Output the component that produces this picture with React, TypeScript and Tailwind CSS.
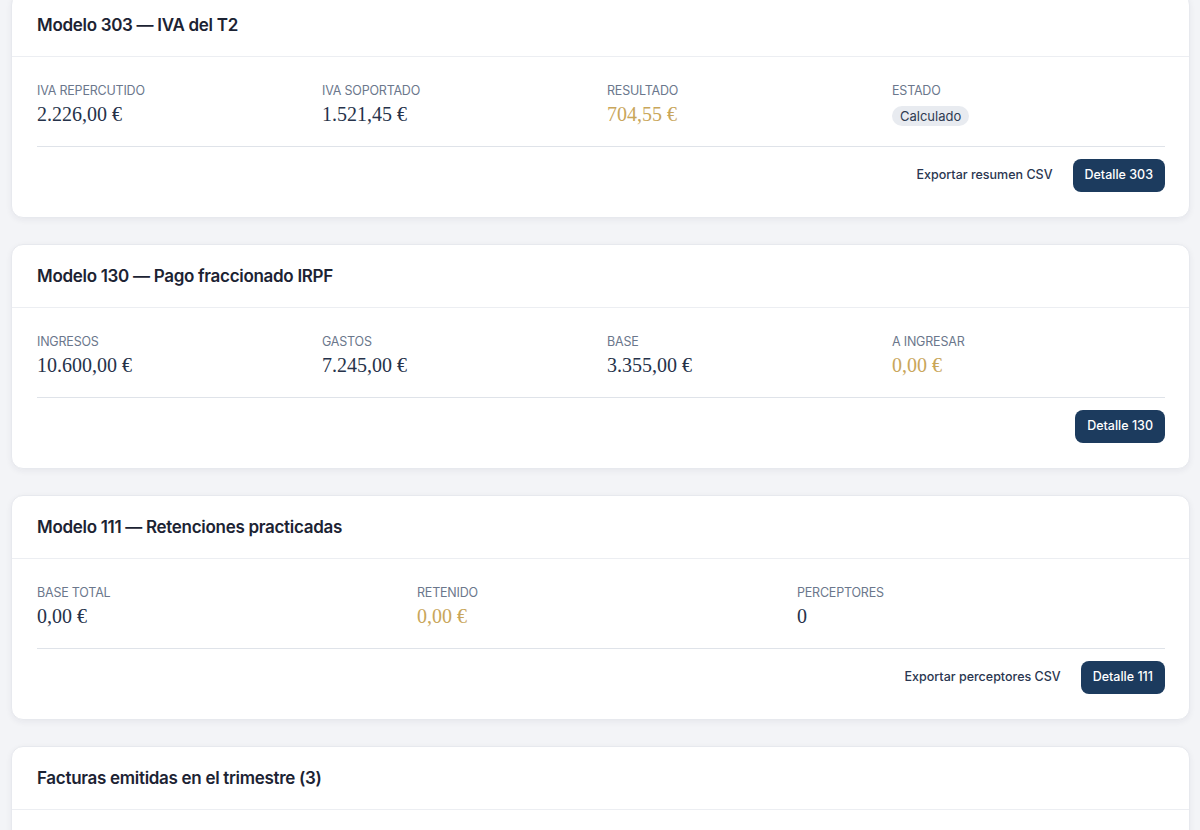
import React from "react";

type Stat = { label: string; value: React.ReactNode; tone?: "gold" | "plain"; badge?: boolean };

const sans = { fontFamily: "Inter, 'Noto Sans', sans-serif" };
const serif = { fontFamily: "'Liberation Serif', 'DejaVu Serif', serif" };

function StatBlock({ label, value, tone, badge }: Stat) {
  return (
    <div className="flex flex-col">
      <div className="text-[12.5px] leading-5 uppercase text-[#6b778c] tracking-[-0.2px]">{label}</div>
      {badge ? (
        <div className="pt-[2px]">
          <span className="inline-block h-5 px-2 rounded-full bg-[#e8ebf0] text-[13px] leading-5 text-[#2f3b52]">
            {value}
          </span>
        </div>
      ) : (
        <div
          className={`text-[20px] leading-[26px] ${tone === "gold" ? "text-[#c9a65a]" : "text-[#26324a]"}`}
          style={serif}
        >
          {value}
        </div>
      )}
    </div>
  );
}

function Card({ title, children }: { title: string; children?: React.ReactNode }) {
  return (
    <section className="bg-white rounded-xl border border-[#e7e9ee] shadow-[0_2px_6px_rgba(30,40,60,0.06)]">
      <header className="h-[63px] flex items-center pl-[25px] pr-6 pt-[1px] border-b border-[#eceef2]">
        <h2 className="text-[17px] font-semibold text-[#1c2333] tracking-[-0.3px]">{title}</h2>
      </header>
      {children}
    </section>
  );
}

function Body({
  stats,
  cols,
  actions,
}: {
  stats: Stat[];
  cols: 3 | 4;
  actions: React.ReactNode;
}) {
  return (
    <div className="pl-[25px] pr-6 pt-6 pb-[25px]">
      <div
        className={`grid gap-3 pb-[19px] border-b border-[#dfe3e9] ${cols === 4 ? "grid-cols-4" : "grid-cols-3"}`}
      >
        {stats.map((s) => (
          <StatBlock key={s.label} {...s} />
        ))}
      </div>
      <div className="flex justify-end items-center gap-2 pt-3">{actions}</div>
    </div>
  );
}

function Ghost({ children }: { children: React.ReactNode }) {
  return (
    <button className="h-[33px] px-3 rounded-lg text-[12.5px] font-medium text-[#2a3650]">{children}</button>
  );
}

function Primary({ children }: { children: React.ReactNode }) {
  return (
    <button className="h-[33px] px-3 rounded-lg bg-[#1c3b5e] text-[12.5px] font-medium text-white">
      {children}
    </button>
  );
}

export default function App() {
  return (
    <div className="min-h-[830px] bg-[#f3f4f7] overflow-hidden" style={sans}>
      <div className="pl-[11px] pr-[10px] mt-[-7px] flex flex-col gap-[26px]">
        <Card title="Modelo 303 — IVA del T2">
          <Body
            cols={4}
            stats={[
              { label: "IVA repercutido", value: "2.226,00 €" },
              { label: "IVA soportado", value: "1.521,45 €" },
              { label: "Resultado", value: "704,55 €", tone: "gold" },
              { label: "Estado", value: "Calculado", badge: true },
            ]}
            actions={
              <>
                <Ghost>Exportar resumen CSV</Ghost>
                <Primary>Detalle 303</Primary>
              </>
            }
          />
        </Card>

        <Card title="Modelo 130 — Pago fraccionado IRPF">
          <Body
            cols={4}
            stats={[
              { label: "Ingresos", value: "10.600,00 €" },
              { label: "Gastos", value: "7.245,00 €" },
              { label: "Base", value: "3.355,00 €" },
              { label: "A ingresar", value: "0,00 €", tone: "gold" },
            ]}
            actions={<Primary>Detalle 130</Primary>}
          />
        </Card>

        <Card title="Modelo 111 — Retenciones practicadas">
          <Body
            cols={3}
            stats={[
              { label: "Base total", value: "0,00 €" },
              { label: "Retenido", value: "0,00 €", tone: "gold" },
              { label: "Perceptores", value: "0" },
            ]}
            actions={
              <>
                <Ghost>Exportar perceptores CSV</Ghost>
                <Primary>Detalle 111</Primary>
              </>
            }
          />
        </Card>

        <Card title="Facturas emitidas en el trimestre (3)">
          <div className="h-[120px]" />
        </Card>
      </div>
    </div>
  );
}
